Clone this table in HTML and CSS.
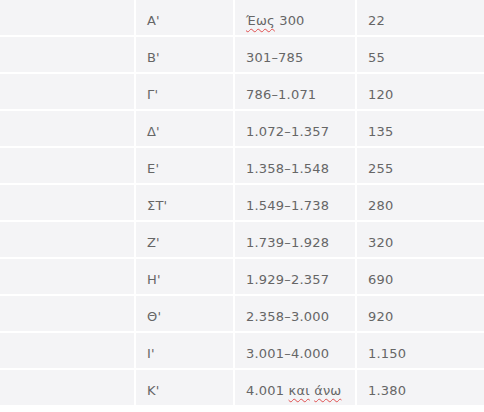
FILE: index.html
```html
<!DOCTYPE html>
<html lang="el">
<head>
<meta charset="utf-8">
<link rel="stylesheet" href="styles.css">
</head>
<body>
<table class="fees">
  <colgroup>
    <col class="c-blank"><col class="c-class"><col class="c-range"><col class="c-amount">
  </colgroup>
  <tbody>
    <tr><td></td><td>Α'</td><td><span class="sp">Έως</span> 300</td><td>22</td></tr>
    <tr><td></td><td>Β'</td><td>301–785</td><td>55</td></tr>
    <tr><td></td><td>Γ'</td><td>786–1.071</td><td>120</td></tr>
    <tr><td></td><td>Δ'</td><td>1.072–1.357</td><td>135</td></tr>
    <tr><td></td><td>Ε'</td><td>1.358–1.548</td><td>255</td></tr>
    <tr><td></td><td>ΣΤ'</td><td>1.549–1.738</td><td>280</td></tr>
    <tr><td></td><td>Ζ'</td><td>1.739–1.928</td><td>320</td></tr>
    <tr><td></td><td>Η'</td><td>1.929–2.357</td><td>690</td></tr>
    <tr><td></td><td>Θ'</td><td>2.358–3.000</td><td>920</td></tr>
    <tr><td></td><td>Ι'</td><td>3.001–4.000</td><td>1.150</td></tr>
    <tr><td></td><td>Κ'</td><td>4.001 <span class="sp">και</span> <span class="sp">άνω</span></td><td>1.380</td></tr>
  </tbody>
</table>
</body>
</html>
```
FILE: styles.css
```css
html, body {
  margin: 0;
  padding: 0;
  background: #ffffff;
}
body {
  overflow: hidden;
}
.fees {
  table-layout: fixed;
  border-collapse: separate;
  border-spacing: 2px;
  margin: -2px 0 0 -2px;
  width: 488px;
  font-family: "DejaVu Sans", sans-serif;
  font-size: 13px;
  letter-spacing: 0.2px;
  color: #666666;
}
.c-blank { width: 134px; }
.c-class { width: 97px; }
.c-range { width: 120px; }
.c-amount { width: 127px; }
.fees td {
  background: #f4f4f6;
  height: 35px;
  padding: 6px 0 0 11px;
  box-sizing: border-box;
  white-space: nowrap;
  vertical-align: middle;
}
.sp {
  text-decoration: underline wavy #e05050;
  text-decoration-thickness: 1px;
  text-underline-offset: 3px;
}
```
